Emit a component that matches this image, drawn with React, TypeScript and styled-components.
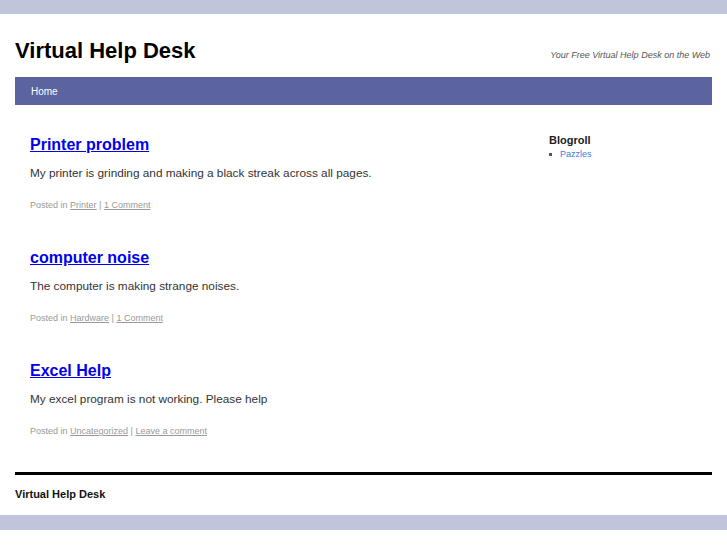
import styled, { createGlobalStyle } from "styled-components";

const GlobalStyle = createGlobalStyle`
  body {
    margin: 0;
    background: #fff;
    font-family: "Liberation Sans", Arial, sans-serif;
  }
`;

const posts = [
  {
    title: "Printer problem",
    text: "My printer is grinding and making a black streak across all pages.",
    category: "Printer",
    comments: "1 Comment",
  },
  {
    title: "computer noise",
    text: "The computer is making strange noises.",
    category: "Hardware",
    comments: "1 Comment",
  },
  {
    title: "Excel Help",
    text: "My excel program is not working. Please help",
    category: "Uncategorized",
    comments: "Leave a comment",
  },
];

const App: React.FC = () => {
  return (
    <>
      <GlobalStyle />
      <TopBar />
      <Wrapper>
        <Header>
          <SiteTitle>Virtual Help Desk</SiteTitle>
          <Tagline>Your Free Virtual Help Desk on the Web</Tagline>
        </Header>
        <Nav>
          <NavLink href="#">Home</NavLink>
        </Nav>
        <Main>
          <Content>
            {posts.map((post) => (
              <Post key={post.title}>
                <PostTitle href="#">{post.title}</PostTitle>
                <PostText>{post.text}</PostText>
                <Meta>
                  Posted in <MetaLink href="#">{post.category}</MetaLink> |{" "}
                  <MetaLink href="#">{post.comments}</MetaLink>
                </Meta>
              </Post>
            ))}
          </Content>
          <Sidebar>
            <SideHeading>Blogroll</SideHeading>
            <SideList>
              <li>
                <SideLink href="#">Pazzles</SideLink>
              </li>
            </SideList>
          </Sidebar>
        </Main>
        <Footer>Virtual Help Desk</Footer>
      </Wrapper>
      <BottomBar />
    </>
  );
};

export default App;

const TopBar = styled.div`
  height: 14px;
  background: #c1c5dc;
`;

const BottomBar = styled.div`
  height: 15px;
  background: #c1c5dc;
`;

const Wrapper = styled.div`
  margin: 0 15px;
`;

const Header = styled.div`
  display: flex;
  justify-content: space-between;
  align-items: baseline;
  height: 63px;
  padding-top: 24px;
  box-sizing: border-box;
`;

const SiteTitle = styled.h1`
  margin: 0;
  font-size: 22px;
  font-weight: bold;
  color: #000;
`;

const Tagline = styled.div`
  font-size: 9px;
  font-style: italic;
  color: #555;
  margin-right: 2px;
`;

const Nav = styled.div`
  height: 28px;
  background: #5c64a0;
  display: flex;
  align-items: center;
  padding-left: 16px;
`;

const NavLink = styled.a`
  color: #fff;
  font-size: 10px;
  text-decoration: none;
`;

const Main = styled.div`
  display: flex;
  justify-content: space-between;
  height: 367px;
`;

const Content = styled.div`
  padding: 30px 0 0 15px;
  width: 480px;
`;

const Post = styled.div`
  height: 113px;
`;

const PostTitle = styled.a`
  display: inline-block;
  font-size: 16px;
  font-weight: bold;
  color: #0000ee;
  text-decoration: underline;
  line-height: 20px;
`;

const PostText = styled.p`
  margin: 10px 0 0;
  font-size: 11.8px;
  color: #333;
  line-height: 16px;
`;

const Meta = styled.div`
  margin-top: 19px;
  font-size: 9px;
  color: #999;
`;

const MetaLink = styled.a`
  color: #999;
  text-decoration: underline;
`;

const Sidebar = styled.div`
  width: 163px;
  padding-top: 29px;
`;

const SideHeading = styled.h2`
  margin: 0 0 2px;
  font-size: 11px;
  font-weight: bold;
  color: #222;
`;

const SideList = styled.ul`
  margin: 0;
  padding: 0;
  list-style: square inside;
  font-size: 9px;
  line-height: 13px;
  color: #555;
`;

const SideLink = styled.a`
  color: #3a80d8;
  text-decoration: none;
  margin-left: -2px;
`;

const Footer = styled.div`
  border-top: 3px solid #000;
  padding-top: 13px;
  font-size: 11px;
  font-weight: bold;
  color: #111;
  height: 43px;
  box-sizing: border-box;
`;
